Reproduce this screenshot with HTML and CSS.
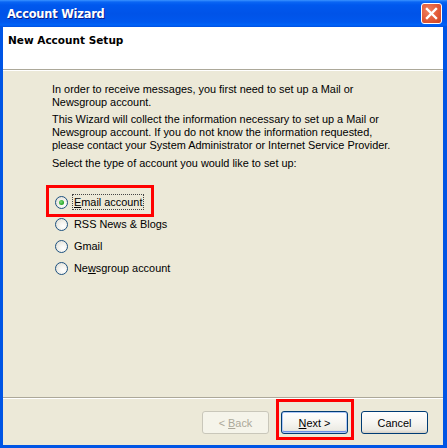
FILE: index.html
```html
<!DOCTYPE html>
<html>
<head>
<meta charset="utf-8">
<link rel="stylesheet" href="styles.css">
</head>
<body>
<div class="window">
  <div class="titlebar">
    <span class="title">Account Wizard</span>
    <span class="close">
      <svg width="15" height="15" viewBox="0 0 15 15"><path d="M3 3 L12 12 M12 3 L3 12" stroke="#fff" stroke-width="2.4" stroke-linecap="square"/></svg>
    </span>
  </div>
  <div class="frame">
    <div class="header">New Account Setup</div>
    <div class="content">
      <p class="p1">In order to receive messages, you first need to set up a Mail or<br>Newsgroup account.</p>
      <p class="p2">This Wizard will collect the information necessary to set up a Mail or<br>Newsgroup account. If you do not know the information requested,<br>please contact your System Administrator or Internet Service Provider.</p>
      <p class="p3">Select the type of account you would like to set up:</p>
      <div class="radios">
        <div class="radio-row"><span class="radio checked"></span><span class="label focus"><u>E</u>mail account</span></div>
        <div class="radio-row"><span class="radio"></span><span class="label">RSS News &amp; Blogs</span></div>
        <div class="radio-row"><span class="radio"></span><span class="label">Gmail</span></div>
        <div class="radio-row"><span class="radio"></span><span class="label">Ne<u>w</u>sgroup account</span></div>
      </div>
    </div>
    <div class="footer">
      <button class="btn disabled">&lt; <u>B</u>ack</button>
      <button class="btn default"><u>N</u>ext &gt;</button>
      <button class="btn cancel">Cancel</button>
    </div>
  </div>
  <div class="mark mark-email"></div>
  <div class="mark mark-next"></div>
</div>
</body>
</html>
```

FILE: styles.css
```css
html, body {
  margin: 0;
  padding: 0;
  background: #0046D5;
}
.window {
  position: relative;
  width: 447px;
  height: 448px;
  display: flex;
  flex-direction: column;
  background: #0055E5;
  font-family: "Liberation Sans", Arial, sans-serif;
}
.titlebar {
  height: 27px;
  display: flex;
  align-items: center;
  justify-content: space-between;
  padding: 0 5px 0 7px;
  box-sizing: border-box;
  background: linear-gradient(to bottom, #3A93FF 0px, #0A66F4 2px, #0058EE 5px, #0053E8 14px, #0058EE 22px, #0063F8 25px, #0050E0 27px);
}
.title {
  color: #fff;
  font-family: "DejaVu Sans", sans-serif;
  font-weight: bold;
  font-size: 11.4px;
  letter-spacing: -0.2px;
  text-shadow: 1px 1px 0 #0A1E8C;
  margin-top: 1px;
}
.close {
  width: 19px;
  height: 19px;
  border: 1px solid #fff;
  border-radius: 3px;
  background: radial-gradient(circle at 35% 35%, #F08060 0%, #E25A38 55%, #CC4424 100%);
  display: flex;
  align-items: center;
  justify-content: center;
}
.close svg { display: block; }
.frame {
  flex: 1;
  display: flex;
  flex-direction: column;
  margin: 0 4px 3px 3px;
  background: #ECE9D8;
}
.header {
  background: #fff;
  border-bottom: 1px solid #ACA899;
  box-sizing: border-box;
  height: 43px;
  padding: 7px 0 0 5px;
  font-family: "DejaVu Sans", sans-serif;
  font-weight: bold;
  font-size: 10.5px;
  color: #000;
}
.content {
  flex: 1;
  border-top: 1px solid #fff;
  padding: 12px 0 0 49px;
  font-size: 10.9px;
  color: #000;
}
.content p {
  margin: 0;
  line-height: 13px;
}
.p2 { margin-top: 4px !important; }
.p3 { margin-top: 5px !important; }
.radios {
  margin-top: 21px;
  display: flex;
  flex-direction: column;
}
.radio-row {
  height: 22px;
  display: flex;
  align-items: center;
  padding-left: 3px;
}
.radio {
  width: 11px;
  height: 11px;
  border: 1px solid #1C5180;
  border-radius: 50%;
  background: radial-gradient(circle at 65% 65%, #fff 0%, #F4F3EE 40%, #DCDAD0 100%);
  position: relative;
  flex: none;
}
.radio.checked::after {
  content: "";
  position: absolute;
  left: 3px;
  top: 3px;
  width: 5px;
  height: 5px;
  border-radius: 50%;
  background: radial-gradient(circle at 40% 40%, #7EDC7E 0%, #21A121 70%);
}
.label {
  margin-left: 4px;
  padding: 1px 1px;
  border: 1px dotted transparent;
}
.label.focus {
  border-color: #444;
}
.footer {
  height: 48px;
  border-top: 1px solid #ACA899;
  box-shadow: inset 0 1px 0 #fff;
  display: flex;
  justify-content: flex-end;
  align-items: flex-start;
  padding: 13px 15px 0 0;
  box-sizing: border-box;
  gap: 12px;
}
.btn {
  width: 67px;
  height: 23px;
  border: 1px solid #003C74;
  border-radius: 3px;
  background: linear-gradient(to bottom, #FFFFFF 0%, #F6F5F1 50%, #ECEBE4 85%, #D6D0C5 100%);
  font-family: "Liberation Sans", Arial, sans-serif;
  font-size: 10.9px;
  color: #000;
  padding: 0;
  margin: 0;
}
.btn.default {
  box-shadow: inset 0 0 0 1px #AFC8F7, inset 0 -1px 0 1px #6F8FE8;
}
.btn.cancel { margin-left: 1px; }
.btn.disabled {
  border-color: #C9C7BA;
  color: #ACA899;
  background: #F5F4EA;
}
.mark {
  position: absolute;
  border: 3px solid #F00;
  box-sizing: border-box;
}
.mark-email {
  left: 46px;
  top: 185px;
  width: 108px;
  height: 32px;
}
.mark-next {
  left: 276px;
  top: 399px;
  width: 78px;
  height: 41px;
}
```
